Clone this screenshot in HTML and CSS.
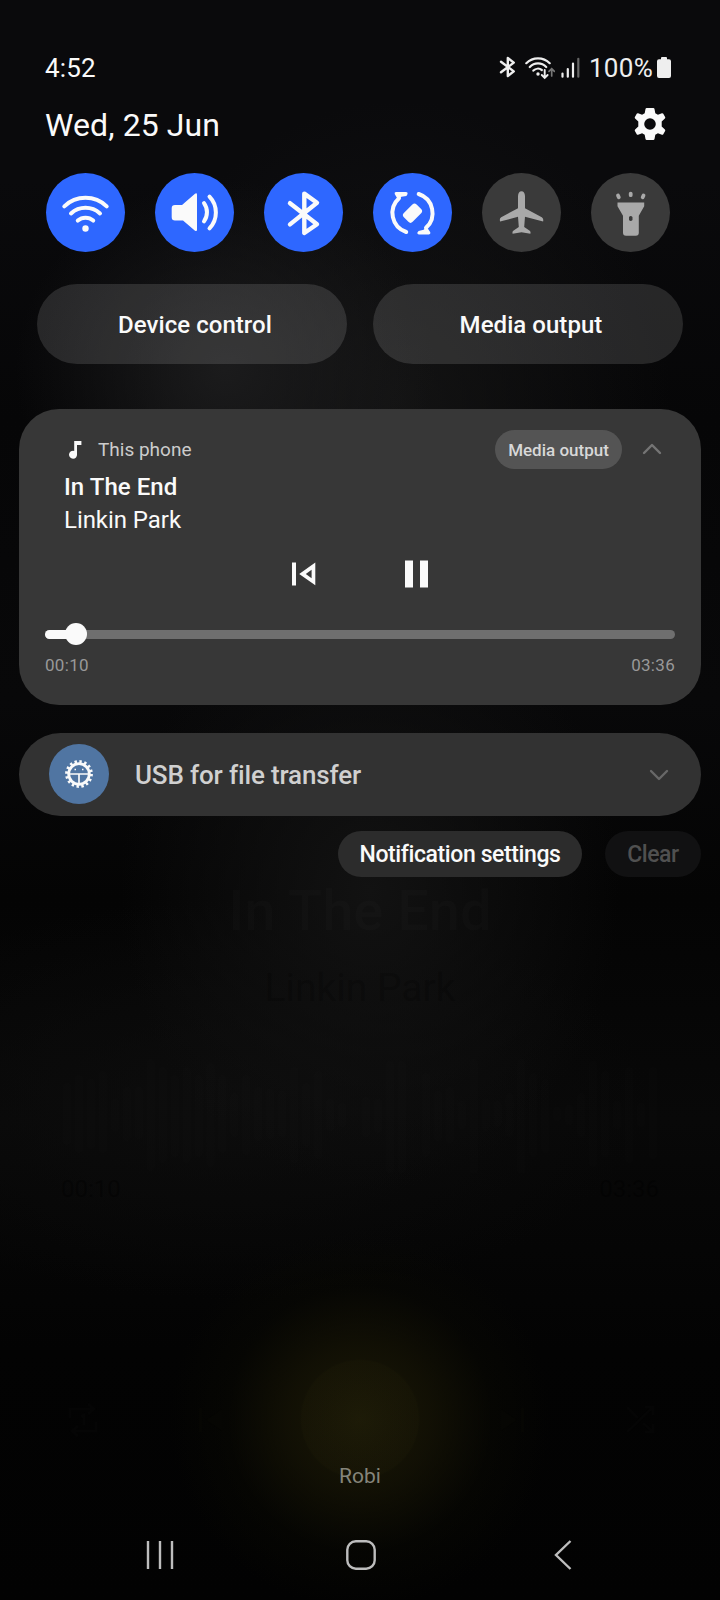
FILE: index.html
```html
<!DOCTYPE html>
<html lang="en">
<head>
<meta charset="utf-8">
<title>Quick panel</title>
<link rel="stylesheet" href="styles.css">
</head>
<body>
<div class="screen">
  <div class="player" aria-hidden="true">
    <div class="player-title">In The End</div>
    <div class="player-artist">Linkin Park</div>
    <svg class="wave" viewBox="0 0 600 116"><path d="M6 30v54M18 22v70M30 26v62M42 18v74M54 46v24M66 34v46M78 34v44M90 6v104M102 14v88M114 22v74M126 14v88M138 22v74M150 10v96M162 22v70M174 40v36M186 22v72M198 34v46M210 36v42M222 38v38M234 14v88M246 30v56M258 18v80M270 46v24M282 50v16M306 44v32M318 46v26M330 8v104M342 8v104M366 20v76M378 38v42M390 34v48M402 48v20M414 6v108M426 46v24M438 48v18M450 40v36M462 6v108M474 20v76M486 26v66M498 54v6M510 52v12M522 40v36M534 8v98M546 18v78M558 48v20M570 14v88M582 50v16M594 14v84"/></svg>
    <div class="player-times"><span>00:10</span><span>03:36</span></div>
    <div class="player-controls">
      <svg width="34" height="36" viewBox="0 0 34 36" class="line"><path d="M4 16V7h22M22 2l6 5-6 5M30 20v9H8M12 24l-6 5 6 5M15 15l3-2v10"/></svg>
      <svg width="24" height="24" viewBox="0 0 24 24" class="fill"><path d="M0 0h3v24H0zM23 1v22L7 12z"/></svg>
      <svg width="24" height="24" viewBox="0 0 24 24" class="fill"><path d="M21 0h3v24h-3zM1 1v22l16-11z"/></svg>
      <svg width="32" height="32" viewBox="0 0 32 32" class="line"><path d="M2 3l11 11M18 19l10 9M2 28L28 3M20 3h8v8M20 28h8v-8"/></svg>
    </div>
  </div>

  <header class="status">
    <span class="clock">4:52</span>
    <div class="indicators">
      <svg class="st-bt" width="17" height="22" viewBox="0 0 17 22"><path d="M2 5.800l12.800 9.600-6 4.600V2l6 4.600L2 16.200"/></svg>
      <svg class="st-wifi" width="30" height="24" viewBox="0 0 30 24">
        <g class="arc"><path d="M1.300 7.200a16.400 16.400 0 0 1 23.400 0M4.800 11a11.300 11.300 0 0 1 16.400 0M8.400 14.600a6.400 6.400 0 0 1 8.400-.6"/></g>
        <circle cx="13" cy="18" r="1.700"/>
        <path class="down" d="M19.700 14v7.600M16.800 19l2.900 2.900 2.900-2.900"/>
        <path class="up" d="M26.700 20v-7M24 15.300l2.700-2.700 2.700 2.700"/>
      </svg>
      <svg class="st-signal" width="20" height="22" viewBox="0 0 20 22"><path d="M2.500 16.500v3.200M7.800 12v7.700M13 6.500v13.200"/><path class="dim" d="M18.300 1.800v17.900"/></svg>
      <span class="percent">100%</span>
      <svg class="st-batt" width="14" height="21" viewBox="0 0 14 21"><path d="M4 2.200V1q0-1 1-1h4q1 0 1 1v1.200h2q2 0 2 2V19q0 2-2 2H2q-2 0-2-2V4.200q0-2 2-2z"/></svg>
    </div>
  </header>

  <div class="date-row">
    <span>Wed, 25 Jun</span>
    <svg width="32" height="32" viewBox="0 0 32 32"><path fill="#fafafa" fill-rule="evenodd" d="M12.700 0h6.600q1 0 1.200 1l.8 4.200 2.600 1.500 4-1.400q.9-.3 1.400.5l1.800 3.200q.5.900-.2 1.500l-3.200 2.900v5.200l3.200 2.900q.7.600.2 1.500l-1.800 3.200q-.5.800-1.400.5l-4-1.400-2.600 1.500-.8 4.200q-.2 1-1.200 1h-6.600q-1 0-1.200-1l-.8-4.200-2.600-1.500-4 1.400q-.9.300-1.400-.5L.9 23q-.5-.9.200-1.500l3.200-2.900v-5.200L1.100 10.500Q.4 9.900.9 9l1.800-3.200q.5-.8 1.400-.5l4 1.400 2.600-1.500.8-4.200q.2-1 1.200-1zM16 10.200a5.800 5.800 0 1 0 0 11.600 5.800 5.800 0 1 0 0-11.600z"/></svg>
  </div>

  <div class="toggles">
    <div class="toggle on"><svg viewBox="0 0 79 79"><g class="stroke w4"><path d="M18.300 33.400a30.600 30.600 0 0 1 42.400 0M25 40.500a21.500 21.500 0 0 1 29 0M31.800 47.600a11.500 11.500 0 0 1 15.400 0"/></g><circle class="solid" cx="39.500" cy="55.500" r="3.200"/></svg></div>
    <div class="toggle on"><svg viewBox="0 0 79 79"><path class="solid" d="M20 32h7L40 20.700q2-1 2 1v35q0 2-2 1L28 47.500h-8q-3.300 0-3.300-3.300v-9q0-3.200 3.300-3.200z"/><g class="stroke w4"><path d="M49 30.200a15.500 15.500 0 0 1 0 18.200M54.500 23.600a23 23 0 0 1 0 31.800"/></g></svg></div>
    <div class="toggle on"><svg viewBox="0 0 79 79"><path class="stroke w45" d="M26 30.200l27 21-12.700 8.800V20.600l12.700 9.100L26 51.400"/></svg></div>
    <div class="toggle on"><svg viewBox="0 0 79 79"><g class="stroke w4"><path d="M45.700 21a20 20 0 0 1 7.300 33.800M33.200 59a20 20 0 0 1-7.200-33.800"/></g><path class="solid" d="M23 19h10q2 .2 1.600 2l-1.200 2-5 .8-3.200 3.200-3.500-5.900q-.5-2 1.300-2.100zM56 61.500H46q-2-.3-1.600-2.100l1.200-1.400 5-1.300 3.200-2.700 3.500 5.200q.5 2-1.300 2.300z"/><rect class="solid" x="30.500" y="34" width="18" height="12.400" rx="3" transform="rotate(-45 39.500 40.200)"/></svg></div>
    <div class="toggle"><svg viewBox="0 0 79 79"><path class="solid" d="M39.500 18.200q3.200 0 3.500 4.800v12.200l16.800 9q2 1.300 1.300 4.300L43 43.800l-.8 10.200 5.500 3.700q1.200 1 .7 3l-8.900-1.400-8.900 1.400q-.5-2 .7-3l5.500-3.700-.8-10.200-17.900 4.700q-.9-3 1.100-4.300l16.800-9V23q.3-4.800 3.500-4.800z"/></svg></div>
    <div class="toggle"><svg viewBox="0 0 79 79"><path class="solid" fill-rule="evenodd" d="M26.500 29.500h26.700v3.800l-5.400 9.500v17q0 3-3 3H35q-3 0-3-3v-17l-5.500-9.500zM38 44v3q1.700 1.800 3.500 0v-3q-1.800-1.800-3.500 0z"/><path d="M27 22.500l.8 1.700M39.700 20.600v1.600M52.500 22.500l-.8 1.700" fill="none" stroke="#a9a9a9" stroke-width="3.800" stroke-linecap="round"/></svg></div>
  </div>

  <div class="quick-buttons">
    <div class="quick">Device control</div>
    <div class="quick">Media output</div>
  </div>

  <section class="media">
    <div class="media-head">
      <svg width="13" height="18" viewBox="0 0 13 18"><path fill="#fafafa" d="M5.200 0h7.200v4H8v9.200a4 4 0 1 1-2.800-3.300z"/></svg>
      <span class="source">This phone</span>
      <span class="chip">Media output</span>
      <svg class="chev" width="20" height="12" viewBox="0 0 20 12"><path d="M2 10l8-8 8 8"/></svg>
    </div>
    <div class="track">In The End</div>
    <div class="artist">Linkin Park</div>
    <div class="controls">
      <svg width="24" height="28" viewBox="0 0 24 28"><path fill="#fafafa" fill-rule="evenodd" d="M0 2.500h4v23H0zM23.300 2.500v22.800L7.200 13.900zM19.600 9.800v8.400l-5.800-4.300z"/></svg>
      <svg width="24" height="28" viewBox="0 0 24 28"><path fill="#fafafa" d="M0 .5h8v27H0zM15 .5h8v27h-8z"/></svg>
    </div>
    <div class="slider"><div class="elapsed"></div></div>
    <div class="times"><span>00:10</span><span>03:36</span></div>
  </section>

  <section class="usb">
    <div class="usb-icon">
      <svg width="28" height="28" viewBox="0 0 28 28" fill="none" stroke="#fafafa">
        <circle cx="14" cy="14" r="12.400" stroke-width="3" stroke-dasharray="2.400 2.470"/>
        <circle cx="14" cy="14" r="10.300" stroke-width="2.800"/>
        <path stroke-width="1.700" d="M5 14h18M14 14v10"/>
        <path stroke-width="1.500" d="M9.500 9.500H11M17 9.500h1.500"/>
      </svg>
    </div>
    <span class="usb-text">USB for file transfer</span>
    <svg class="chev" width="20" height="12" viewBox="0 0 20 12"><path d="M2 2l8 8 8-8"/></svg>
  </section>

  <div class="actions">
    <span class="action">Notification settings</span>
    <span class="action disabled">Clear</span>
  </div>

  <footer class="bottom">
    <div class="carrier">Robi</div>
    <nav class="nav">
      <svg width="28" height="30" viewBox="0 0 28 30"><path d="M2 1v28M14 1v28M26 1v28"/></svg>
      <svg width="30" height="30" viewBox="0 0 30 30"><rect x="1.300" y="1.300" width="27.400" height="27.400" rx="8.500"/></svg>
      <svg width="18" height="30" viewBox="0 0 18 30"><path d="M16.500 1L2 15l14.500 14"/></svg>
    </nav>
  </footer>
</div>
</body>
</html>
```
FILE: styles.css
```css
* { box-sizing: border-box; }
body {
  margin: 0;
  background: #000;
  font-family: Roboto, "Liberation Sans", sans-serif;
  color: #fafafa;
}
svg { display: block; flex: none; }
.screen {
  position: relative;
  display: flex;
  flex-direction: column;
  width: 720px;
  height: 1600px;
  padding-top: 48px;
  overflow: hidden;
  background:
    radial-gradient(circle 60px at 360px 1419px, rgba(40, 36, 10, .15) 97%, transparent 100%),
    radial-gradient(circle 190px at 360px 1419px, #1b1907 0, rgba(22, 20, 5, .75) 38%, rgba(10, 10, 3, .4) 70%, transparent 100%),
    radial-gradient(ellipse 210px 190px at 225px 370px, rgba(28, 28, 29, .95), transparent),
    radial-gradient(ellipse 250px 300px at 370px 890px, #121212, transparent),
    radial-gradient(ellipse 420px 200px at 230px 1100px, rgba(14, 14, 14, .75), transparent),
    radial-gradient(ellipse 270px 300px at 400px 400px, rgba(22, 22, 22, .8), transparent),
    linear-gradient(#0a0a0c 0, #0a0a0c 180px, #060607 420px, #080809 700px, #040404 900px, #080808 1120px, #060606 1200px, #030303 1350px, #020202 1600px);
}

/* dimmed music player showing through the panel */
.player {
  position: absolute;
  inset: 0;
  padding: 876px 61px 0;
  display: flex;
  flex-direction: column;
  color: rgba(255, 255, 255, .016);
}
.player-title { font-size: 56px; line-height: 70px; font-weight: 500; text-align: center; }
.player-artist { margin-top: 17px; font-size: 39px; line-height: 50px; text-align: center; color: rgba(0, 0, 0, .2); }
.wave { width: 598px; height: 116px; margin-top: 44px; fill: none; stroke: rgba(255, 255, 255, .009); stroke-width: 9; stroke-linecap: round; }
.player-times { display: flex; justify-content: space-between; margin-top: 1px; font-size: 24px; line-height: 30px; color: rgba(0, 0, 0, .35); }
.player-controls {
  display: grid;
  grid-template-columns: 133px 301px 125px auto;
  align-items: center;
  margin: 198px 0 0 5px;
  height: 36px;
}
.line { fill: none; stroke: #050505; stroke-width: 3; }
.fill { fill: #060603; }

.status {
  position: relative;
  display: flex;
  justify-content: space-between;
  height: 40px;
  padding: 0 49px 0 45px;
  font-size: 26px;
  line-height: 40px;
}
.clock { letter-spacing: .2px; }
.indicators { display: flex; align-items: center; color: #eee; }
.st-bt { fill: none; stroke: #eee; stroke-width: 2.4; stroke-linejoin: round; stroke-linecap: round; margin-right: 9px; margin-bottom: 2px; }
.st-wifi { fill: #eee; margin-right: 5px; }
.st-wifi path { fill: none; stroke: #eee; stroke-width: 2.2; stroke-linecap: round; }
.st-wifi .down { stroke-width: 1.9; }
.st-wifi .up { stroke: #777; stroke-width: 1.7; }
.st-signal { fill: none; stroke: #eee; stroke-width: 2.2; stroke-linecap: round; margin-right: 9px; }
.st-signal .dim { stroke: #666; }
.percent { margin-right: 4px; letter-spacing: .3px; }
.st-batt { fill: #eee; margin-bottom: 2px; }

.date-row {
  position: relative;
  display: flex;
  justify-content: space-between;
  align-items: center;
  height: 44px;
  margin-top: 15px;
  padding: 0 54px 0 45px;
  font-size: 32px;
  line-height: 44px;
  letter-spacing: .1px;
}
.date-row svg { margin-bottom: 3px; }

.toggles {
  position: relative;
  display: flex;
  gap: 30px;
  margin-top: 26px;
  padding: 0 46px;
}
.toggle { width: 79px; height: 79px; border-radius: 50%; background: #3a3a3a; }
.toggle.on { background: #2e67ff; }
.toggle .solid { fill: #a9a9a9; }
.toggle.on .solid { fill: #fafafa; }
.stroke { fill: none; stroke: #fafafa; stroke-linecap: round; stroke-linejoin: round; }
.w4 { stroke-width: 4; }
.w45 { stroke-width: 4.4; }

.quick-buttons {
  position: relative;
  display: flex;
  gap: 26px;
  margin-top: 32px;
  padding: 0 37px;
}
.quick {
  flex: 1;
  height: 80px;
  padding-left: 6px;
  border-radius: 40px;
  background: rgba(255, 255, 255, .125);
  text-align: center;
  font-size: 24px;
  font-weight: 500;
  line-height: 82px;
  letter-spacing: .05px;
}

.media {
  position: relative;
  height: 296px;
  margin: 45px 19px 0;
  padding: 21px 26px 0;
  border-radius: 40px;
  background: #373737;
}
.media-head { display: flex; align-items: center; height: 39px; padding: 0 13px 0 24px; }
.source { margin-left: 16px; font-size: 19px; line-height: 43px; color: #ccc; }
.chip {
  width: 127px;
  height: 39px;
  margin: 0 20px 0 auto;
  border-radius: 20px;
  background: #545454;
  color: #d8d8d8;
  text-align: center;
  font-size: 17px;
  font-weight: 500;
  line-height: 40px;
}
.chev { fill: none; stroke: #757575; stroke-width: 2.4; stroke-linecap: round; stroke-linejoin: round; }
.media .chev { margin-bottom: 2px; }
.track, .artist { padding-left: 19px; font-size: 24px; line-height: 33px; }
.track { margin-top: 2px; font-weight: 500; letter-spacing: .05px; }
.artist { letter-spacing: -.05px; }
.controls { display: flex; gap: 89px; margin: 22.5px 0 0 247px; }
.slider { height: 9px; margin-top: 42px; border-radius: 5px; background: #6f6f6f; }
.elapsed { position: relative; width: 31px; height: 9px; border-radius: 5px; background: #fafafa; }
.elapsed::after {
  content: "";
  position: absolute;
  left: 20px;
  top: -6.5px;
  width: 22px;
  height: 22px;
  border-radius: 50%;
  background: #fafafa;
}
.times { display: flex; justify-content: space-between; margin-top: 14.5px; font-size: 17px; line-height: 24px; letter-spacing: .3px; color: #999; }

.usb {
  position: relative;
  display: flex;
  align-items: center;
  height: 83px;
  margin: 28px 19px 0;
  padding: 0 32px 0 30px;
  border-radius: 42px;
  background: #323232;
}
.usb .chev { margin-left: auto; stroke: #686868; }
.usb-icon {
  display: flex;
  align-items: center;
  justify-content: center;
  width: 60px;
  height: 60px;
  margin-bottom: 2px;
  border-radius: 50%;
  background: #5075a2;
}
.usb-text { margin-left: 26px; padding-top: 2px; font-size: 26px; font-weight: 500; line-height: 83px; letter-spacing: -.16px; color: #d0d0d0; }

.actions {
  position: relative;
  display: flex;
  justify-content: flex-end;
  gap: 23px;
  margin-top: 15px;
  padding-right: 19px;
}
.action {
  width: 244px;
  height: 46px;
  border-radius: 23px;
  background: #2c2c2c;
  text-align: center;
  font-size: 23px;
  font-weight: 500;
  line-height: 48px;
  letter-spacing: -.4px;
}
.action.disabled { width: 96px; background: #111112; color: #505050; }

.bottom { position: relative; margin-top: auto; }
.carrier { text-align: center; font-size: 21px; line-height: 30px; color: #85857a; }
.nav {
  display: grid;
  grid-template-columns: 200px 208px auto;
  margin-top: 49px;
  padding: 0 0 30px 146px;
  fill: none;
  stroke: #bdbdbd;
  stroke-width: 2.4;
}
```
